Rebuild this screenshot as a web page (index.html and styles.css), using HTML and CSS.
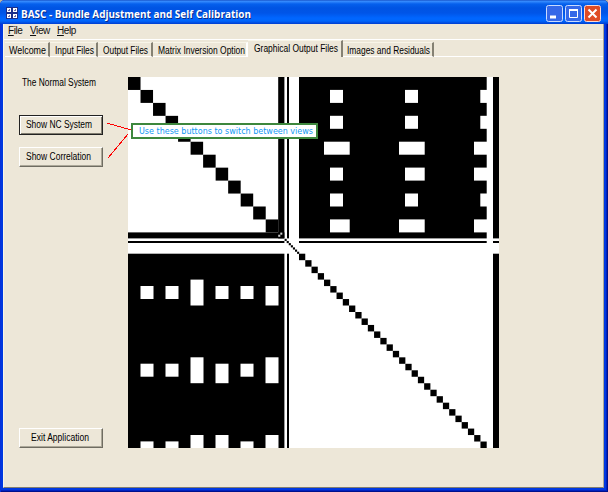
FILE: index.html
```
<!DOCTYPE html>
<html lang="en"><head><meta charset="utf-8"><title>BASC</title><link rel="stylesheet" href="styles.css"></head>
<body>
<div class="window">
<header class="titlebar">
<svg class="appicon" width="12" height="12" viewBox="0 0 12 12" shape-rendering="crispEdges"><rect width="12" height="12" fill="#1b2f8c"/><path d="M1 1h4v4H1zM7 1h4v4H7zM1 7h4v4H1zM7 7h4v4H7z" fill="#fff"/><path d="M2 3h2M3 2v2M8 3h2M9 2v2M2 9h2M3 8v2M8 9h2M9 8v2" stroke="#6b6fae"/></svg>
<svg class="title" width="250" height="20"><text x="0" y="13" textLength="230" lengthAdjust="spacingAndGlyphs">BASC - Bundle Adjustment and Self Calibration</text></svg>
<div class="controls">
<svg width="17" height="17"><rect class="blue" x=".5" y=".5" width="16" height="16" rx="2"/><path d="M4 12h6" stroke="#fff" stroke-width="3"/></svg>
<svg width="17" height="17"><rect class="blue" x=".5" y=".5" width="16" height="16" rx="2"/><path d="M4.500 4v8.500h8V4M4 5h9" fill="none" stroke="#fff"/><path d="M4 5h9" stroke="#fff" stroke-width="2"/></svg>
<svg width="17" height="17"><rect class="red" x=".5" y=".5" width="16" height="16" rx="2"/><path d="M4.500 4.500l8 8m0-8l-8 8" stroke="#fff" stroke-width="2"/></svg>
</div></header>
<div class="client">
<nav class="menu"><span class="m1"><u>F</u>ile</span><span class="m2"><u>V</u>iew</span><span><u>H</u>elp</span></nav>
<div class="tabs">
<div class="tab t1"><svg width="38" height="14"><text x="0" y="10" textLength="37" lengthAdjust="spacingAndGlyphs">Welcome</text></svg></div>
<div class="tab t2"><svg width="40" height="14"><text x="1" y="10" textLength="39" lengthAdjust="spacingAndGlyphs">Input Files</text></svg></div>
<div class="tab t3"><svg width="46" height="14"><text x="1" y="10" textLength="45" lengthAdjust="spacingAndGlyphs">Output Files</text></svg></div>
<div class="tab t4"><svg width="88" height="14"><text x="1" y="10" textLength="87" lengthAdjust="spacingAndGlyphs">Matrix Inversion Option</text></svg></div>
<div class="tab t5 active"><svg width="85" height="14"><text x="1" y="10" textLength="84" lengthAdjust="spacingAndGlyphs">Graphical Output Files</text></svg></div>
<div class="tab t6"><svg width="85" height="14"><text x="0" y="10" textLength="83" lengthAdjust="spacingAndGlyphs">Images and Residuals</text></svg></div>
</div>
<main class="page">
<aside class="side">
<svg class="label" width="76" height="14"><text x="0" y="9" textLength="74" lengthAdjust="spacingAndGlyphs">The Normal System</text></svg>
<button class="btn focus"><svg width="70" height="14"><text x="0" y="10" textLength="66" lengthAdjust="spacingAndGlyphs">Show NC System</text></svg></button>
<button class="btn second"><svg width="70" height="14"><text x="0" y="10" textLength="65" lengthAdjust="spacingAndGlyphs">Show Correlation</text></svg></button>
<button class="btn exit"><svg width="60" height="14"><text x="0" y="10" textLength="58" lengthAdjust="spacingAndGlyphs">Exit Application</text></svg></button>
</aside>
<svg id="matrix" class="matrix" width="371" height="371" viewBox="0 0 371 371"></svg>
<svg class="pointer" width="26" height="38" shape-rendering="crispEdges"><path d="M1 0l24 7M2 35L22 11" stroke="#f00" fill="none"/></svg>
<div class="tip"><svg width="176" height="13"><text x="1" y="9" textLength="174" lengthAdjust="spacingAndGlyphs">Use these buttons to switch between views</text></svg></div>
</main>
</div></div>
<script src="matrix.js"></script>
</body></html>
```
FILE: styles.css
```
*{box-sizing:border-box}
body{margin:0;background:#b9b5a0;font:10px "Liberation Sans",Arial,sans-serif;color:#111}
svg{display:block;overflow:visible}
.window{width:608px;height:492px;padding:0 4px 4px 3px;display:flex;flex-direction:column;background:#0038e0;border-radius:5px 5px 0 0;box-shadow:inset 1px 0 #0831d9,inset -1px -1px #00108c,inset -2px -2px #0022c0;overflow:hidden}
.titlebar{height:24px;margin:0 -4px 0 -3px;padding:5px 7px 0 6px;display:flex;background:linear-gradient(#0b3fb8 0,#3b91ff 1px,#2a80fa 2px,#0560ed 4px,#0054e3 8px,#0055e8 13px,#0066ff 18px,#0066fb 21px,#003dd0 24px)}
.appicon{margin-top:2px}
.title{margin-left:3px;font:bold 11px "Open Sans","Liberation Sans",sans-serif;fill:#fff;text-shadow:1px 1px #0b2b86}
.controls{display:flex;gap:2px;margin-left:auto}
.blue{fill:#3568e8;stroke:#c9dbff}
.red{fill:#df4c25;stroke:#ffd9d0}
.client{flex:1;background:#ede7d8;border-left:1px solid #f8f5e8;border-right:1px solid #aaa697;border-bottom:1px solid #817e72;display:flex;flex-direction:column}
.menu{height:16px;padding:1px 0 0 4px;display:flex;line-height:12px;font-size:10px;border-bottom:1px solid #fff}
.menu span{width:26px;letter-spacing:-.4px}
.menu .m1{width:22px}.menu .m2{width:27px}
.tabs{height:17px;display:flex;align-items:flex-end;padding-left:1px;font-size:10px}
.tab{height:15px;padding:1px 0 0 4px;border-top:1px solid #f8f5e8;border-right:2px solid #858173;border-bottom:1px solid #fff}
.t1{width:45px}.t2{width:48px}.t3{width:55px}.t4{width:95px;border-right-color:#fff}
.t5{width:95px;padding-left:5px}.t6{width:91px}
.active{height:17px;border-bottom:0}
.tabs::after{content:"";flex:1;height:1px;background:#fff}
.page{flex:1;display:flex;position:relative;padding-top:20px}
.side{width:124px;padding-left:15px;display:flex;flex-direction:column}
.label{margin:0 0 0 3px}
.btn{width:84px;height:20px;margin:0;padding:0;display:flex;align-items:center;justify-content:center;background:#ede7d8;border:1px solid;border-color:#fff #6f6c61 #6f6c61 #fff;box-shadow:inset -1px -1px #aca899;font:10px "Liberation Sans",sans-serif}
.focus{margin-top:24px;border-color:#222;box-shadow:inset 1px 1px #fff,inset -1px -1px #807c70}
.second{margin-top:12px}
.exit{margin-top:261px}
.matrix{background:#fff}
.pointer{position:absolute;left:102px;top:66px}
.tip{position:absolute;left:127px;top:66px;width:187px;height:16px;padding:1px 0 0 6px;background:#fff;border:1px solid #3d873d;box-shadow:inset 0 0 0 1px #3d873d;font:9px "DejaVu Sans",sans-serif}
.tip text{fill:#1298f3}
```
FILE: matrix.js
```
const svg = document.getElementById('matrix');
function r(x0, y0, x1, y1, fill = '#000') {
  const e = document.createElementNS('http://www.w3.org/2000/svg', 'rect');
  e.setAttribute('x', x0); e.setAttribute('y', y0);
  e.setAttribute('width', x1 - x0); e.setAttribute('height', y1 - y0);
  e.setAttribute('fill', fill); svg.append(e);
}
for (let i = 0; i < 12; i++) r(i * 12.52, i * 12.95, (i + 1) * 12.52, (i + 1) * 12.95);
// Border bands and off-diagonal blocks
const rows = [[0, 161.4], [164, 166], [176.7, 371]];
r(150.2, 0, 156.4, 161.4); r(0, 155.4, 156.4, 161.4); r(0, 164, 156.4, 166);
r(159, 0, 161, 161.4); r(159, 176.7, 161, 371);
r(0, 176.7, 156.4, 371); r(171, 0, 358.7, 161.4); r(171, 164, 358.7, 166);
rows.forEach(([a, b]) => r(365, a, 371, b));
const w = '#fff', n = [202, 215], wide = [196, 221.7], n2 = [277, 290], wide2 = [271, 296.7], a = [352.3, 359], b = [346, 359];
[[n, n2, a], [n, n2, a], [wide, wide2, b], [n, [277, 296.7], b], [n, n2, a], [[202, 221.7], wide2, b]]
  .forEach((cells, i) => cells.forEach(c => r(c[0], 12.9 + i * 25.9, c[1], 25.9 + i * 25.9, w)));
const s = [0, 13], t = [-6.4, 19.5], m = [0, 19.5];
[[s, s, t, s, s, m], [s, s, t, m, s, t], [s, s, t, t, s, t]]
  .forEach((cells, j) => cells.forEach((c, i) => r(12.5 + i * 25, 209 + j * 77.7 + c[0], 25.5 + i * 25, Math.min(371, 209 + j * 77.7 + c[1]), w)));
for (let i = 0; i < 30; i++) r(171 + i * 6.257, 176.7 + i * 6.477, 171 + (i + 1) * 6.257, 176.7 + (i + 1) * 6.477);
for (let i = 0; i < 7; i++) r(156.6 + i * 2.08, 161.8 + i * 2.15, 158.7 + i * 2.08, 163.95 + i * 2.15);
r(152.3, 155.6, 154.3, 157.7, '#ccc'); r(150.2, 157.7, 152.3, 159.8, '#ccc');
```
